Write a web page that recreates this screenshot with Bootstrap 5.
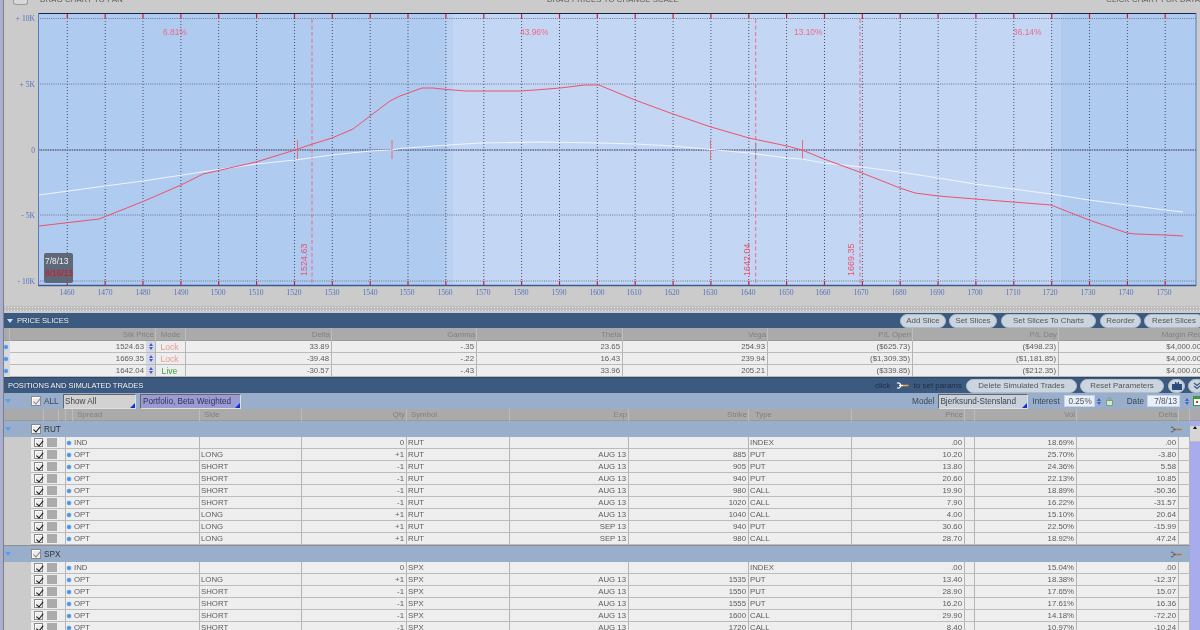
<!DOCTYPE html>
<html lang="en"><head><meta charset="utf-8"><title>Analyze</title>
<link href="https://cdn.jsdelivr.net/npm/bootstrap@5.3.0/dist/css/bootstrap.min.css" rel="stylesheet">
<style>
html,body{margin:0;height:630px;overflow:hidden;background:#cbcbcb}
body{font-family:"Liberation Sans",Arial,sans-serif;font-size:7.8px;line-height:11px;color:#5c5c5c}
.tos-frame{width:1200px;height:630px;overflow:hidden;border-left:3px solid #a9afd0}
.tos-inner{height:630px;overflow:hidden;border-left:1px solid #808080;background:#cbcbcb;filter:blur(.3px)}
.top-strip{height:13px;overflow:hidden;color:#555;font-size:7.6px;line-height:6px;letter-spacing:.2px;padding-left:9px}
.top-strip>span{display:block;margin-top:-3px}
.top-ic{width:15px;height:5px;border:1px solid #9a9a9a;border-top:0;border-radius:0 0 3px 3px;background:#d8d8d8;margin-right:12px}
.chart-svg{display:block;width:1196px;height:293px}
.chart-svg text{font-family:"Liberation Sans",Arial,sans-serif}
.chart-svg .axis{font-family:"Liberation Serif",serif;font-size:7.6px;fill:#5673c0}
.chart-svg .pct{font-size:8.4px;fill:#f0688a}
.chart-svg .vert{font-size:9px;fill:#ee5068}
.dots{height:5px;background-color:#bdbdbd;background-image:radial-gradient(#e6e6e6 .8px,transparent .9px);background-size:3px 3px;margin-bottom:2px}
.sec-bar{background:#3c5a80;color:#fff;text-shadow:0 0 1px #12233c}
.sec-a{height:15px}
.sec-b{height:16px;border-top:1px solid #2f4868}
.sec-title{font-size:7.6px;letter-spacing:-.05px}
.tw-white,.tw-blue{display:inline-block;width:0;height:0;border-left:3.5px solid transparent;border-right:3.5px solid transparent}
.tw-white{border-top:4px solid #cfe0f5;margin:0 4px 0 3px}
.tw-blue{border-top:4px solid #5a9cf0;margin-left:1px}
.btn.pill-x{--bs-btn-padding-x:0;--bs-btn-padding-y:0;--bs-btn-font-size:7.9px;--bs-btn-line-height:12px;--bs-btn-color:#555;--bs-btn-bg:#cad5df;--bs-btn-border-color:#aebccb;--bs-btn-border-width:1px;height:14px;flex:none;white-space:nowrap}
.p-add{width:46px}.p-set{width:48px;margin-left:3px}.p-chart{width:95px;margin-left:4px}.p-reo{width:41px;margin-left:4px}.p-res{width:60px;margin-left:3px}
.p-del{width:111px;margin-left:4px}.p-rp{width:84px;margin-left:3px}
.p-cam{width:17px;margin-left:4px}.p-dn{width:17px;margin-left:3px;margin-right:-5px}
.sl-grid{display:grid;grid-template-columns:6px 146px 30px 146px 145px 146px 145px 145px 146px 145px}
.head-row{background:#aaa;color:#808080;height:13px;border-bottom:1px solid #9a9a9a}
.head-row>span{border-right:1px solid #bcbcbc;padding:0 1px;white-space:nowrap;line-height:13px}
.sl-row{height:12px;background:#eee;border-bottom:1px solid #bbb}
.sl-row>span{border-right:1px solid #b5b5b5;padding-right:2px;line-height:12px;white-space:nowrap}
.sl-row>.dot-cell{background:#d9d9d9;border:0;padding:0}
.blue-dot{display:inline-block;width:4px;height:4px;border-radius:50%;background:#4d93e6;box-shadow:0 0 0 .5px #a9cdf2}
.spin{display:inline-flex;flex-direction:column;justify-content:center;gap:1px;width:9px;height:11px;background:#d6d7e2;margin-left:2px;align-items:center;vertical-align:top}
.spin i{width:0;height:0;border-left:2.5px solid transparent;border-right:2.5px solid transparent}
.spin i:first-child{border-bottom:3px solid #3a5fd0}
.spin i:last-child{border-top:3px solid #3a5fd0}
.lock-c{color:#e89c8c;font-size:8.6px}.live-c{color:#3aa63a;font-size:8.6px}
.tool-row{height:16px;background:#99aecb;color:#3c4656;font-size:8.2px}
.drop-x{position:relative;height:15px;border:1px solid #666;border-right-color:#dfdfdf;border-bottom-color:#dfdfdf;background:#d2d2d2;line-height:14px;padding-left:1px;color:#444;font-size:8.2px;white-space:nowrap;flex:none}
.drop-x::after{content:"";position:absolute;right:0;bottom:0;border-left:5px solid transparent;border-bottom:5px solid #1430d8}
.drop-p{background:#9a9bd2;color:#33335c;width:101px;margin-left:4px;padding-left:2px}
.drop-s{width:73px;margin-left:6px}
.drop-m{width:90px;margin-left:4px;background:#c8d1dc}
.inp-x{height:12px;background:#e7effa;border:1px solid #c9d5e6;text-align:right;line-height:11px;padding-right:2px;color:#555;font-size:8.2px;flex:none}
.cbx{position:relative;display:block;width:10px;height:10px;background:#ececec;border:1px solid #8a8a8a;box-shadow:inset 1px 1px 0 #fff}
.cbx::after{content:"";position:absolute;left:3px;top:0;width:3.5px;height:6.5px;border:solid #111;border-width:0 1.5px 1.5px 0;transform:rotate(40deg)}
.cbx.dim::after{border-color:#888}
.col-head,.pos-row{display:grid;grid-template-columns:13px 15px 7px 7px 127px 102px 105px 103px 119px 120px 103px 113px 10px 102px 102px 11px}
.col-head{height:12px;background:#aaa;color:#808080;border-bottom:1px solid #999;padding-left:27px}
.col-head>span{border-right:1px solid #bcbcbc;line-height:12px;white-space:nowrap;padding:0 1px}
.pos-wrap{height:209px;overflow:hidden}
.group-x{height:16px;background:#99aecb;color:#333;border-top:0;font-size:8.2px}
.group-y{height:17px;border-top:1px solid #8f8f8f}
.pos-row{height:12px;margin-left:27px;background:#eee;border-bottom:1px solid #bcbcbc}
.pos-row>span{border-right:1px solid #b5b5b5;line-height:12.5px;white-space:nowrap;padding:0 2px 0 1px;overflow:hidden}
.pos-row>.c0{border:0;padding:1px 0 0 3px}
.pos-row>.c1{border:0;padding:1px 0 0 3px}
.pos-row>.c2{padding:0}
.pos-row>.c3{border:0;padding:0 0 0 1px}
.pos-row .cbx{width:9px;height:9px}
.lock-sq{display:block;width:10px;height:9px;background:#ababab}
.scroll-x{width:10px;flex:none;background:#a9acec}
.scroll-top{height:16px;background:#d6d6d6;border-bottom:1px solid #bbb}
.scroll-top i{display:block;width:0;height:0;margin:5px auto 0;border-left:2.5px solid transparent;border-right:2.5px solid transparent;border-bottom:3px solid #111}
</style></head><body>
<div class="tos-frame"><div class="tos-inner">

<div class="top-strip d-flex position-relative">
<i class="top-ic"></i><span>DRAG CHART TO PAN</span>
<span class="position-absolute top-0" style="left:543px">DRAG PRICES TO CHANGE SCALE</span>
<span class="position-absolute top-0 end-0" style="right:11px">CLICK CHART FOR DATA</span>
</div>

<svg class="chart-svg" viewBox="4 13 1196 293" xmlns="http://www.w3.org/2000/svg">
<rect x="38" y="13" width="1158" height="272" fill="#b0cbf0"/>
<rect x="446" y="13" width="615" height="272" fill="#b9d1f3"/>
<rect x="453" y="13" width="598" height="272" fill="#c3d7f5"/>
<path d="M67.3 18V281M105.2 18V281M143 18V281M180.9 18V281M218.7 18V281M256.6 18V281M294.5 18V281M332.3 18V281M370.2 18V281M408 18V281M445.9 18V281M483.8 18V281M521.6 18V281M559.5 18V281M597.3 18V281M635.2 18V281M673.1 18V281M710.9 18V281M748.8 18V281M786.6 18V281M824.5 18V281M862.4 18V281M900.2 18V281M938.1 18V281M975.9 18V281M1013.8 18V281M1051.7 18V281M1089.5 18V281M1127.4 18V281M1165.2 18V281" stroke="#4b4f66" stroke-width="1" stroke-dasharray="1 2" fill="none"/>
<path d="M38 18.5H1196M38 84H1196M38 215H1196M38 281H1196" stroke="#6c7393" stroke-width="1" stroke-dasharray="1 1.2" fill="none"/>
<path d="M38 150H1196" stroke="#60648a" stroke-width="1.6" stroke-dasharray="1.6 .8" fill="none"/>
<path d="M67.3 14V18M105.2 14V18M143 14V18M180.9 14V18M218.7 14V18M256.6 14V18M294.5 14V18M332.3 14V18M370.2 14V18M408 14V18M445.9 14V18M483.8 14V18M521.6 14V18M559.5 14V18M597.3 14V18M635.2 14V18M673.1 14V18M710.9 14V18M748.8 14V18M786.6 14V18M824.5 14V18M862.4 14V18M900.2 14V18M938.1 14V18M975.9 14V18M1013.8 14V18M1051.7 14V18M1089.5 14V18M1127.4 14V18M1165.2 14V18M67.3 281V285M105.2 281V285M143 281V285M180.9 281V285M218.7 281V285M256.6 281V285M294.5 281V285M332.3 281V285M370.2 281V285M408 281V285M445.9 281V285M483.8 281V285M521.6 281V285M559.5 281V285M597.3 281V285M635.2 281V285M673.1 281V285M710.9 281V285M748.8 281V285M786.6 281V285M824.5 281V285M862.4 281V285M900.2 281V285M938.1 281V285M975.9 281V285M1013.8 281V285M1051.7 281V285M1089.5 281V285M1127.4 281V285M1165.2 281V285" stroke="#ea1524" stroke-width="1.2" fill="none"/>
<path d="M38 13.5H1196" stroke="#0f2750" stroke-width="1"/>
<path d="M38.5 13V286M1196 13V286" stroke="#5c7cb8" stroke-width="1"/>
<path d="M38 285.5H1196" stroke="#3c5a90" stroke-width="1.6"/>
<path d="M312 19V285M755.7 19V285M860 19V285" stroke="#ea6a80" stroke-width="1" stroke-dasharray="4 2.5" fill="none"/>
<path d="M297.5 140V159M392 140V159M710.5 140V159M802.5 140V159" stroke="#ee6a78" stroke-width="1" fill="none"/>
<path d="M755.7 143V158" stroke="#8b8f96" stroke-width="1" fill="none"/>
<polyline points="39,195 105,186 143,181 202,172 256,164 295,160 332,155 370,151 392,150 400,148.5 433,146 480,143 540,142 600,143 635,144 673,146 711,149.5 749,153 787,158 802,159 824,163 862,167 900,172 938,178 975,184 1013,189 1051,194 1089,200 1127,205 1165,210 1183,212" fill="none" stroke="#eef3ff" stroke-width="1.2"/>
<polyline points="39,226 99,219 143,201.5 181,185 203,174 256,162 295,150 311,144.5 332,138 353,129 370,116 390,101 400,96 422,88 433,88 447,89.5 466,91 520,91 535,90 560,88 585,85 599,85 635,100 673,114 711,127 749,138 787,146 802,150 824,159 862,173 900,188 915,193 938,196 975,199 1013,202 1051,205 1089,220 1127,233 1135,234 1165,235 1183,236" fill="none" stroke="#f0506a" stroke-width="1"/>
<text class="pct" x="163" y="35">6.81%</text>
<text class="pct" x="520" y="35">43.96%</text>
<text class="pct" x="794" y="35">13.10%</text>
<text class="pct" x="1013" y="35">36.14%</text>
<text class="vert" transform="translate(307 276) rotate(-90)">1524.63</text>
<text class="vert" transform="translate(750 276) rotate(-90)">1642.04</text>
<text class="vert" transform="translate(854 276) rotate(-90)">1669.35</text>
<rect x="44" y="253" width="29" height="30" rx="2" fill="#5e6879"/>
<text x="45" y="264" font-size="8.4" fill="#f2f2f2">7/8/13</text>
<text x="45" y="276" font-size="8.4" fill="#e0101c">8/16/13</text>
<g class="axis" text-anchor="end">
<text class="axis" x="35" y="21">+ 10K</text>
<text class="axis" x="35" y="86.5">+ 5K</text>
<text class="axis" x="35" y="152.5">0</text>
<text class="axis" x="35" y="218">- 5K</text>
<text class="axis" x="35" y="283.5">- 10K</text>
</g>
<g text-anchor="middle">
<text class="axis" x="67" y="295">1460</text><text class="axis" x="105" y="295">1470</text><text class="axis" x="143" y="295">1480</text><text class="axis" x="181" y="295">1490</text><text class="axis" x="218" y="295">1500</text><text class="axis" x="256" y="295">1510</text><text class="axis" x="294" y="295">1520</text><text class="axis" x="332" y="295">1530</text><text class="axis" x="370" y="295">1540</text><text class="axis" x="407" y="295">1550</text><text class="axis" x="445" y="295">1560</text><text class="axis" x="483" y="295">1570</text><text class="axis" x="521" y="295">1580</text><text class="axis" x="559" y="295">1590</text><text class="axis" x="597" y="295">1600</text><text class="axis" x="634" y="295">1610</text><text class="axis" x="672" y="295">1620</text><text class="axis" x="710" y="295">1630</text><text class="axis" x="748" y="295">1640</text><text class="axis" x="786" y="295">1650</text><text class="axis" x="823" y="295">1660</text><text class="axis" x="861" y="295">1670</text><text class="axis" x="899" y="295">1680</text><text class="axis" x="937" y="295">1690</text><text class="axis" x="975" y="295">1700</text><text class="axis" x="1013" y="295">1710</text><text class="axis" x="1050" y="295">1720</text><text class="axis" x="1088" y="295">1730</text><text class="axis" x="1126" y="295">1740</text><text class="axis" x="1164" y="295">1750</text>
</g>
</svg>
<div class="dots"></div>

<div class="sec-bar sec-a d-flex align-items-center">
<i class="tw-white"></i><span class="sec-title">PRICE SLICES</span>
<div class="ms-auto d-flex" style="margin-right:-4px">
<button class="btn rounded-pill pill-x p-add">Add Slice</button><button class="btn rounded-pill pill-x p-set">Set Slices</button><button class="btn rounded-pill pill-x p-chart">Set Slices To Charts</button><button class="btn rounded-pill pill-x p-reo">Reorder</button><button class="btn rounded-pill pill-x p-res">Reset Slices</button>
</div></div>

<div class="sl-grid head-row"><span></span><span class="text-end">Stk Price</span><span class="text-center">Mode</span><span class="text-end">Delta</span><span class="text-end">Gamma</span><span class="text-end">Theta</span><span class="text-end">Vega</span><span class="text-end">P/L Open</span><span class="text-end">P/L Day</span><span class="text-end">Margin Req</span></div>
<div class="sl-grid sl-row"><span class="dot-cell"><i class="blue-dot"></i></span><span class="text-end" style="padding:0">1524.63<i class="spin"><i></i><i></i></i></span><span class="text-center lock-c">Lock</span><span class="text-end">33.89</span><span class="text-end">-.35</span><span class="text-end">23.65</span><span class="text-end">254.93</span><span class="text-end">($625.73)</span><span class="text-end">($498.23)</span><span class="text-end">$4,000.00</span></div>
<div class="sl-grid sl-row"><span class="dot-cell"><i class="blue-dot"></i></span><span class="text-end" style="padding:0">1669.35<i class="spin"><i></i><i></i></i></span><span class="text-center lock-c">Lock</span><span class="text-end">-39.48</span><span class="text-end">-.22</span><span class="text-end">16.43</span><span class="text-end">239.94</span><span class="text-end">($1,309.35)</span><span class="text-end">($1,181.85)</span><span class="text-end">$4,000.00</span></div>
<div class="sl-grid sl-row"><span class="dot-cell"><i class="blue-dot"></i></span><span class="text-end" style="padding:0">1642.04<i class="spin"><i></i><i></i></i></span><span class="text-center live-c">Live</span><span class="text-end">-30.57</span><span class="text-end">-.43</span><span class="text-end">33.96</span><span class="text-end">205.21</span><span class="text-end">($339.85)</span><span class="text-end">($212.35)</span><span class="text-end">$4,000.00</span></div>

<div class="sec-bar sec-b d-flex align-items-center">
<span class="sec-title ps-1" style="padding-left:4px">POSITIONS AND SIMULATED TRADES</span>
<div class="ms-auto d-flex align-items-center">
<span style="color:#1f2c40;text-shadow:none;font-size:8px">click</span>
<svg width="13" height="7" viewBox="0 0 13 7" style="margin:0 5px"><path d="M1 1.2A2.6 2.6 0 1 1 1 5.8" fill="none" stroke="#fff" stroke-width="1.2"/><path d="M3 3.5H7" stroke="#fff" stroke-width="1.4"/><path d="M7 3.5H12.5" stroke="#f0a23c" stroke-width="1.6"/></svg>
<span style="color:#1f2c40;text-shadow:none;font-size:8px">to set params</span>
<button class="btn rounded-pill pill-x p-del">Delete Simulated Trades</button><button class="btn rounded-pill pill-x p-rp">Reset Parameters</button>
<button class="btn rounded-pill pill-x p-cam d-flex align-items-center justify-content-center" aria-label="Snapshot"><svg width="10" height="8" viewBox="0 0 10 8"><path d="M0 2H3V0H4L5 2 6 0H7V2H10V8H0Z" fill="#2c4d7c"/></svg></button>
<button class="btn rounded-pill pill-x p-dn d-flex align-items-center justify-content-center" aria-label="Expand"><svg width="8" height="8" viewBox="0 0 8 8"><path d="M1 1 4 3.5 7 1M1 4 4 6.5 7 4" fill="none" stroke="#3c5a80" stroke-width="1.2"/></svg></button>
</div></div>

<div class="tool-row d-flex align-items-center position-relative" style="overflow:hidden">
<i class="tw-blue"></i>
<i class="cbx dim" style="margin-left:20px;flex:none"></i><span style="margin-left:3px;width:13px">ALL</span>
<span class="drop-x drop-s">Show All</span><span class="drop-x drop-p">Portfolio, Beta Weighted</span>
<div class="ms-auto d-flex align-items-center" style="margin-right:-1px">
<span>Model</span><span class="drop-x drop-m">Bjerksund-Stensland</span>
<span style="margin-left:4px">Interest</span><span class="inp-x" style="width:31px;margin-left:4px">0.25%</span><i class="spin" style="margin-left:0;background:none"><i></i><i></i></i>
<svg width="7" height="9" viewBox="0 0 7 9" style="margin-left:2px"><rect x=".5" y="3.5" width="6" height="5" fill="#cfe8cf" stroke="#7fa07f"/><path d="M2 3.5V2A1.5 1.5 0 0 1 5 2V3.5" fill="none" stroke="#7fa07f"/></svg>
<span style="margin-left:14px">Date</span><span class="inp-x" style="width:33px;margin-left:3px">7/8/13</span><i class="spin" style="background:none"><i></i><i></i></i>
<svg width="8" height="10" viewBox="0 0 8 10" style="margin-left:2px"><rect x=".5" y=".5" width="9" height="9" fill="#fff" stroke="#3b9a3b"/><rect x="1" y="1" width="8" height="2" fill="#3b9a3b"/><rect x="3" y="5" width="2" height="2" fill="#d33"/></svg>
</div></div>

<div class="col-head"><span></span><span></span><span></span><span></span><span style="padding-left:4px">Spread</span><span style="padding-left:4px">Side</span><span class="text-end">Qty</span><span style="padding-left:4px">Symbol</span><span class="text-end">Exp</span><span class="text-end">Strike</span><span style="padding-left:6px">Type</span><span class="text-end">Price</span><span></span><span class="text-end">Vol</span><span class="text-end">Delta</span><span></span></div>

<div class="d-flex pos-wrap">
<div class="flex-grow-1" style="min-width:0">

<div class="group-x d-flex align-items-center position-relative"><i class="tw-blue"></i><i class="cbx" style="margin-left:20px;flex:none"></i><span style="margin-left:3px">RUT</span>
<svg class="ms-auto" width="12" height="7" viewBox="0 0 13 7" style="margin-right:8px"><path d="M1 1.2A2.6 2.6 0 1 1 1 5.8" fill="none" stroke="#555" stroke-width="1"/><path d="M3 3.5H7" stroke="#666" stroke-width="1.2"/><path d="M7 3.5H12.5" stroke="#c4741e" stroke-width="1.6"/></svg></div>

<div class="pos-row"><span class="c0"><i class="cbx"></i></span><span class="c1"><i class="lock-sq"></i></span><span class="c2"></span><span class="c3"><i class="blue-dot"></i></span><span>IND</span><span></span><span class="text-end">0</span><span>RUT</span><span></span><span></span><span>INDEX</span><span class="text-end">.00</span><span></span><span class="text-end">18.69%</span><span class="text-end">.00</span><span></span></div>
<div class="pos-row"><span class="c0"><i class="cbx"></i></span><span class="c1"><i class="lock-sq"></i></span><span class="c2"></span><span class="c3"><i class="blue-dot"></i></span><span>OPT</span><span>LONG</span><span class="text-end">+1</span><span>RUT</span><span class="text-end">AUG 13</span><span class="text-end">885</span><span>PUT</span><span class="text-end">10.20</span><span></span><span class="text-end">25.70%</span><span class="text-end">-3.80</span><span></span></div>
<div class="pos-row"><span class="c0"><i class="cbx"></i></span><span class="c1"><i class="lock-sq"></i></span><span class="c2"></span><span class="c3"><i class="blue-dot"></i></span><span>OPT</span><span>SHORT</span><span class="text-end">-1</span><span>RUT</span><span class="text-end">AUG 13</span><span class="text-end">905</span><span>PUT</span><span class="text-end">13.80</span><span></span><span class="text-end">24.36%</span><span class="text-end">5.58</span><span></span></div>
<div class="pos-row"><span class="c0"><i class="cbx"></i></span><span class="c1"><i class="lock-sq"></i></span><span class="c2"></span><span class="c3"><i class="blue-dot"></i></span><span>OPT</span><span>SHORT</span><span class="text-end">-1</span><span>RUT</span><span class="text-end">AUG 13</span><span class="text-end">940</span><span>PUT</span><span class="text-end">20.60</span><span></span><span class="text-end">22.13%</span><span class="text-end">10.85</span><span></span></div>
<div class="pos-row"><span class="c0"><i class="cbx"></i></span><span class="c1"><i class="lock-sq"></i></span><span class="c2"></span><span class="c3"><i class="blue-dot"></i></span><span>OPT</span><span>SHORT</span><span class="text-end">-1</span><span>RUT</span><span class="text-end">AUG 13</span><span class="text-end">980</span><span>CALL</span><span class="text-end">19.90</span><span></span><span class="text-end">18.89%</span><span class="text-end">-50.36</span><span></span></div>
<div class="pos-row"><span class="c0"><i class="cbx"></i></span><span class="c1"><i class="lock-sq"></i></span><span class="c2"></span><span class="c3"><i class="blue-dot"></i></span><span>OPT</span><span>SHORT</span><span class="text-end">-1</span><span>RUT</span><span class="text-end">AUG 13</span><span class="text-end">1020</span><span>CALL</span><span class="text-end">7.90</span><span></span><span class="text-end">16.22%</span><span class="text-end">-31.57</span><span></span></div>
<div class="pos-row"><span class="c0"><i class="cbx"></i></span><span class="c1"><i class="lock-sq"></i></span><span class="c2"></span><span class="c3"><i class="blue-dot"></i></span><span>OPT</span><span>LONG</span><span class="text-end">+1</span><span>RUT</span><span class="text-end">AUG 13</span><span class="text-end">1040</span><span>CALL</span><span class="text-end">4.00</span><span></span><span class="text-end">15.10%</span><span class="text-end">20.64</span><span></span></div>
<div class="pos-row"><span class="c0"><i class="cbx"></i></span><span class="c1"><i class="lock-sq"></i></span><span class="c2"></span><span class="c3"><i class="blue-dot"></i></span><span>OPT</span><span>LONG</span><span class="text-end">+1</span><span>RUT</span><span class="text-end">SEP 13</span><span class="text-end">940</span><span>PUT</span><span class="text-end">30.60</span><span></span><span class="text-end">22.50%</span><span class="text-end">-15.99</span><span></span></div>
<div class="pos-row"><span class="c0"><i class="cbx"></i></span><span class="c1"><i class="lock-sq"></i></span><span class="c2"></span><span class="c3"><i class="blue-dot"></i></span><span>OPT</span><span>LONG</span><span class="text-end">+1</span><span>RUT</span><span class="text-end">SEP 13</span><span class="text-end">980</span><span>CALL</span><span class="text-end">28.70</span><span></span><span class="text-end">18.92%</span><span class="text-end">47.24</span><span></span></div>

<div class="group-x group-y d-flex align-items-center"><i class="tw-blue"></i><i class="cbx dim" style="margin-left:20px;flex:none"></i><span style="margin-left:3px">SPX</span>
<svg class="ms-auto" width="12" height="7" viewBox="0 0 13 7" style="margin-right:8px"><path d="M1 1.2A2.6 2.6 0 1 1 1 5.8" fill="none" stroke="#555" stroke-width="1"/><path d="M3 3.5H7" stroke="#666" stroke-width="1.2"/><path d="M7 3.5H12.5" stroke="#c4741e" stroke-width="1.6"/></svg></div>

<div class="pos-row"><span class="c0"><i class="cbx"></i></span><span class="c1"><i class="lock-sq"></i></span><span class="c2"></span><span class="c3"><i class="blue-dot"></i></span><span>IND</span><span></span><span class="text-end">0</span><span>SPX</span><span></span><span></span><span>INDEX</span><span class="text-end">.00</span><span></span><span class="text-end">15.04%</span><span class="text-end">.00</span><span></span></div>
<div class="pos-row"><span class="c0"><i class="cbx"></i></span><span class="c1"><i class="lock-sq"></i></span><span class="c2"></span><span class="c3"><i class="blue-dot"></i></span><span>OPT</span><span>LONG</span><span class="text-end">+1</span><span>SPX</span><span class="text-end">AUG 13</span><span class="text-end">1535</span><span>PUT</span><span class="text-end">13.40</span><span></span><span class="text-end">18.38%</span><span class="text-end">-12.37</span><span></span></div>
<div class="pos-row"><span class="c0"><i class="cbx"></i></span><span class="c1"><i class="lock-sq"></i></span><span class="c2"></span><span class="c3"><i class="blue-dot"></i></span><span>OPT</span><span>SHORT</span><span class="text-end">-1</span><span>SPX</span><span class="text-end">AUG 13</span><span class="text-end">1550</span><span>PUT</span><span class="text-end">28.90</span><span></span><span class="text-end">17.65%</span><span class="text-end">15.07</span><span></span></div>
<div class="pos-row"><span class="c0"><i class="cbx"></i></span><span class="c1"><i class="lock-sq"></i></span><span class="c2"></span><span class="c3"><i class="blue-dot"></i></span><span>OPT</span><span>SHORT</span><span class="text-end">-1</span><span>SPX</span><span class="text-end">AUG 13</span><span class="text-end">1555</span><span>PUT</span><span class="text-end">16.20</span><span></span><span class="text-end">17.61%</span><span class="text-end">16.36</span><span></span></div>
<div class="pos-row"><span class="c0"><i class="cbx"></i></span><span class="c1"><i class="lock-sq"></i></span><span class="c2"></span><span class="c3"><i class="blue-dot"></i></span><span>OPT</span><span>SHORT</span><span class="text-end">-1</span><span>SPX</span><span class="text-end">AUG 13</span><span class="text-end">1600</span><span>CALL</span><span class="text-end">29.90</span><span></span><span class="text-end">14.18%</span><span class="text-end">-72.20</span><span></span></div>
<div class="pos-row"><span class="c0"><i class="cbx"></i></span><span class="c1"><i class="lock-sq"></i></span><span class="c2"></span><span class="c3"><i class="blue-dot"></i></span><span>OPT</span><span>SHORT</span><span class="text-end">-1</span><span>SPX</span><span class="text-end">AUG 13</span><span class="text-end">1720</span><span>CALL</span><span class="text-end">8.40</span><span></span><span class="text-end">10.97%</span><span class="text-end">-10.24</span><span></span></div>

</div>
<div class="scroll-x"><div class="scroll-top"><i></i></div></div>
</div>

</div></div>
<script src="https://cdn.jsdelivr.net/npm/bootstrap@5.3.0/dist/js/bootstrap.bundle.min.js"></script>
</body></html>
